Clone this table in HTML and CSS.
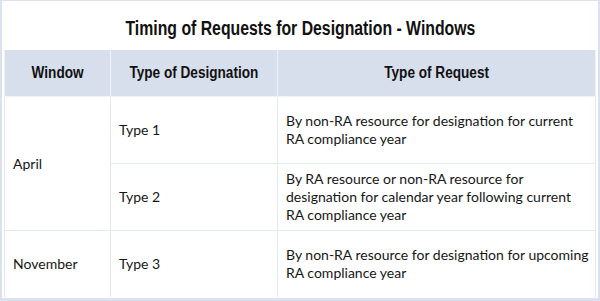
FILE: index.html
```html
<!DOCTYPE html>
<html>
<head>
<meta charset="utf-8">
<link rel="stylesheet" href="styles.css">
</head>
<body>
<div class="frame">
  <h1 class="title"><span class="narrow-title">Timing of Requests for Designation - Windows</span></h1>
  <table class="timing">
    <colgroup>
      <col class="c1"><col class="c2"><col class="c3">
    </colgroup>
    <thead>
      <tr><th><span class="narrow">Window</span></th><th><span class="narrow">Type of Designation</span></th><th><span class="narrow">Type of Request</span></th></tr>
    </thead>
    <tbody>
      <tr class="r1"><td rowspan="2">April</td><td>Type 1</td><td>By non-RA resource for designation for current RA compliance year</td></tr>
      <tr class="r2"><td>Type 2</td><td>By RA resource or non-RA resource for designation for calendar year following current RA compliance year</td></tr>
      <tr class="r3"><td>November</td><td>Type 3</td><td>By non-RA resource for designation for upcoming RA compliance year</td></tr>
    </tbody>
  </table>
</div>
</body>
</html>
```
FILE: styles.css
```css
html, body { margin: 0; padding: 0; background: #fff; }
.frame {
  box-sizing: border-box;
  width: 600px;
  height: 301px;
  border: 2px solid #dbe2ef;
  border-top-width: 1px;
  border-bottom-width: 3px;
  padding: 0 2px 0 2px;
  background: #fff;
}
.title {
  margin: 0;
  height: 49px;
  padding-top: 15px;
  box-sizing: border-box;
  text-align: center;
  font-family: "Liberation Sans", Arial, sans-serif;
  font-weight: bold;
  font-size: 20px;
  line-height: 24px;
  color: #111;
  white-space: nowrap;
}
.narrow-title {
  display: inline-block;
  transform: scaleX(0.79);
}
.narrow {
  display: inline-block;
  transform: scaleX(0.85);
  white-space: nowrap;
}
.timing {
  width: 591px;
  border-collapse: collapse;
  table-layout: fixed;
  font-family: Lato, "Open Sans", sans-serif;
  font-size: 14px;
  color: #161616;
}
.c1 { width: 106px; }
.c2 { width: 167px; }
.c3 { width: 318px; }
.timing th {
  background: #d6dfeb;
  height: 46px;
  padding: 0;
  font-family: "Liberation Sans", Arial, sans-serif;
  font-weight: bold;
  font-size: 16px;
  color: #111;
  border: 1px solid #eef1f7;
  border-top: none;
}
.timing td {
  border: 1px solid #e3e8f2;
  padding: 0 4px 0 8px;
  line-height: 18px;
  vertical-align: middle;
}
.r1 td, .r2 td { height: 66px; }
.r3 td { height: 66px; border-bottom: none; }
```
